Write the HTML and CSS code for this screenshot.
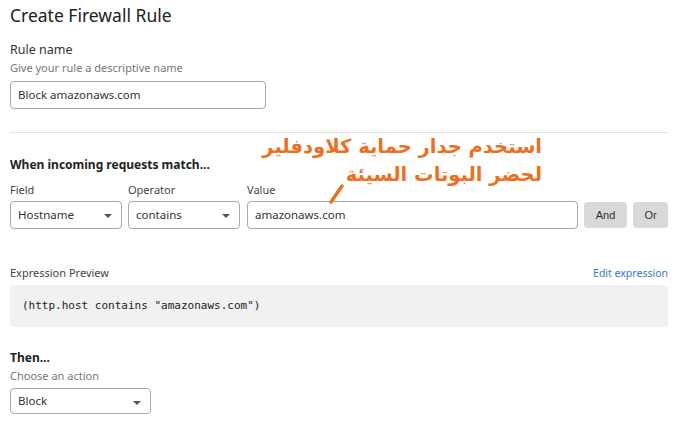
FILE: index.html
```html
<!DOCTYPE html>
<html lang="en">
<head>
    <meta charset="UTF-8">
    <title>Create Firewall Rule</title>
    <link rel="stylesheet" href="styles.css">
</head>
<body>
    <h1 class="page-title">Create Firewall Rule</h1>

    <!-- rule name -->
    <div class="group">
        <div class="label">Rule name</div>
        <div class="hint">Give your rule a descriptive name</div>
        <div class="input name-input">Block amazonaws.com</div>
    </div>

    <div class="divider"></div>

    <h2 class="section-title">When incoming requests match...</h2>
    <div class="match-row">
        <div class="col col-field">
            <div class="small-label">Field</div>
            <div class="input select">Hostname<span class="caret"></span></div>
        </div>
        <div class="col col-field">
            <div class="small-label">Operator</div>
            <div class="input select">contains<span class="caret"></span></div>
        </div>
        <div class="col col-value">
            <div class="small-label">Value</div>
            <div class="input">amazonaws.com</div>
        </div>
        <button class="btn btn-and">And</button>
        <button class="btn btn-or">Or</button>
    </div>

    <!-- expression preview -->
    <div class="preview-head">
        <span class="small-label">Expression Preview</span>
        <a class="link">Edit expression</a>
    </div>
    <div class="code">(http.host contains "amazonaws.com")</div>

    <h2 class="section-title then">Then...</h2>
    <div class="hint">Choose an action</div>
    <div class="input select action-select">Block<span class="caret"></span></div>

    <!-- annotation over the page -->
    <div class="note" dir="rtl">
        <div>استخدم جدار حماية كلاودفلير</div>
        <div>لحضر البوتات السيئة</div>
    </div>
    <svg class="note-arrow" width="20" height="24" viewBox="0 0 20 24">
        <line x1="15" y1="3" x2="4" y2="19" stroke="#ec7022" stroke-width="3.5" stroke-linecap="round"/>
    </svg>
</body>
</html>
```

FILE: styles.css
```css
body {
    margin: 0;
    padding: 0 12px 0 10px;
    font-family: 'Noto Sans', 'Open Sans', sans-serif;
    color: #333;
    background: #fff;
    position: relative;
}
.page-title {
    margin: 0;
    padding-top: 3px;
    font-size: 17.5px;
    line-height: 24px;
    font-weight: 400;
    color: #222;
}
.group {
    margin-top: 14px;
}
.label {
    font-size: 12.5px;
    line-height: 17px;
    color: #333;
}
.hint {
    margin-top: 2px;
    font-size: 11px;
    line-height: 15px;
    color: #777;
}
.input {
    box-sizing: border-box;
    height: 28px;
    border: 1px solid #a9a9a9;
    border-radius: 4px;
    padding: 0 7px;
    font-size: 11.5px;
    line-height: 26px;
    color: #333;
    position: relative;
    background: #fff;
}
.name-input {
    width: 256px;
    margin-top: 6px;
}
.divider {
    height: 1px;
    background: #e3e3e3;
    margin-top: 23px;
}
.section-title {
    margin: 23px 0 0;
    font-size: 12px;
    line-height: 17px;
    font-weight: 700;
    color: #222;
}
.match-row {
    display: flex;
    align-items: flex-end;
    gap: 6px;
    margin-top: 9px;
}
.col-field {
    width: 112px;
}
.col-field + .col-value {
    margin-left: 1px;
}
.col-value {
    flex: 1;
}
.small-label {
    font-size: 11px;
    line-height: 15px;
    color: #444;
    display: block;
    margin-bottom: 4px;
}
.select .caret {
    position: absolute;
    right: 9px;
    top: 12px;
    border-left: 4px solid transparent;
    border-right: 4px solid transparent;
    border-top: 4px solid #555;
}
.btn {
    height: 26px;
    margin-bottom: 1px;
    border: none;
    border-radius: 4px;
    background: #d9d9d9;
    color: #333;
    font-family: 'Liberation Sans', sans-serif;
    font-size: 11px;
    padding: 0;
}
.btn-and {
    width: 43px;
}
.btn-or {
    width: 35px;
}
.preview-head {
    display: flex;
    justify-content: space-between;
    align-items: baseline;
    margin-top: 36px;
}
.link {
    font-size: 10.5px;
    color: #3a78c3;
}
.code {
    margin-top: 1px;
    height: 42px;
    border-radius: 4px;
    background: #f1f1f1;
    padding: 0 12px;
    font-family: 'DejaVu Sans Mono', monospace;
    font-size: 11px;
    line-height: 42px;
    color: #222;
}
.then {
    margin-top: 22px;
}
.action-select {
    width: 141px;
    height: 26px;
    line-height: 24px;
    margin-top: 5px;
}
.note {
    position: absolute;
    top: 133px;
    left: 240px;
    width: 302px;
    font-family: 'DejaVu Sans', sans-serif;
    font-weight: 700;
    font-size: 19.5px;
    line-height: 28px;
    color: #ec7022;
    text-align: right;
}
.note-arrow {
    position: absolute;
    left: 327px;
    top: 183px;
}
```
